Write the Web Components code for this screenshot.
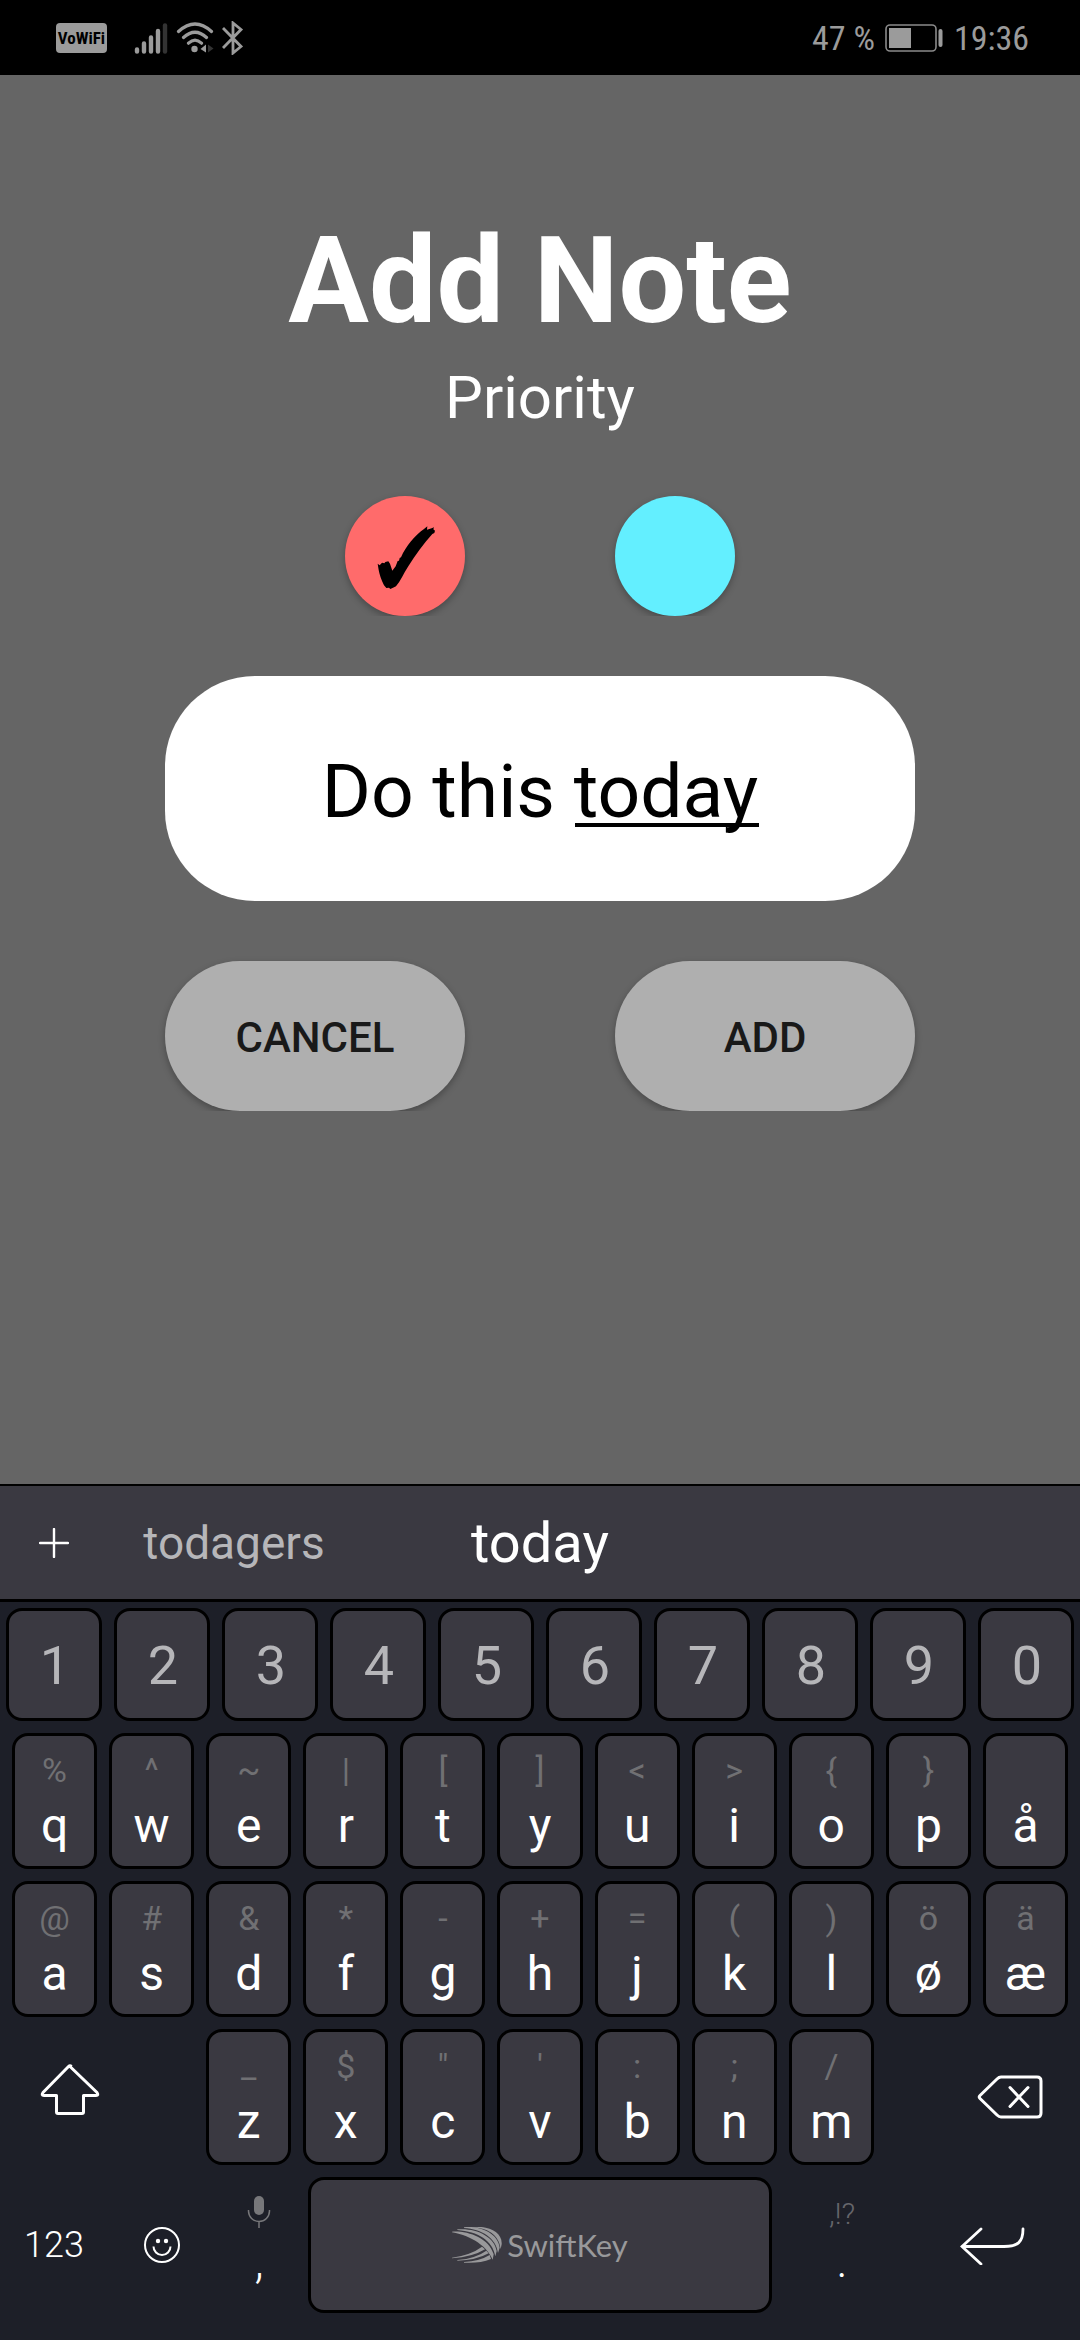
<!DOCTYPE html>
<html lang="en">
<head>
<meta charset="utf-8">
<meta name="viewport" content="width=device-width, initial-scale=1">
<title>Add Note</title>
<style>
  html, body { margin: 0; background: #656565; }
  body { font-family: Roboto, "Noto Sans", sans-serif; }
</style>
</head>
<body>
<note-screen></note-screen>

<script>
const define = (name, html, init) => {
  const template = document.createElement('template');
  template.innerHTML = html;
  customElements.define(name, class extends HTMLElement {
    constructor() {
      super();
      this.attachShadow({ mode: 'open' }).append(template.content.cloneNode(true));
    }
    connectedCallback() { if (init) init(this, this.shadowRoot); }
  });
};

/* ---------- status bar ---------- */
define('status-bar', `
<style>
  :host { display: flex; align-items: center; justify-content: space-between; height: 75px;
    padding: 0 51px 0 56px; background: #000; color: #9b9b9b; box-sizing: border-box; }
  .side { display: flex; align-items: center; }
  .badge { width: 51px; height: 30px; border-radius: 4px; background: #9b9b9b; color: #000;
    font: bold 17px/30px "Liberation Sans Narrow", "Roboto Condensed", Roboto, sans-serif; text-align: center; margin-right: 27px; }
  .text { font: 34px/40px "Roboto Condensed", "Liberation Sans Narrow", Roboto, sans-serif; }
  svg { display: block; }
  .signal { margin-right: 8px; } .wifi { margin-right: 8px; }
  .battery { margin: 0 11px 0 10px; }
</style>
<div class="side">
  <span class="badge">VoWiFi</span>
  <svg class="signal" width="34" height="32" viewBox="0 0 34 32" stroke="#9b9b9b" stroke-width="4.4" stroke-linecap="round"><path d="M3 27.5v2M10 21.5v8M17 15.500v14M24 9v20.500"/><path d="M31 3.500v26" stroke="#333"/></svg>
  <svg class="wifi" width="38" height="32" viewBox="0 0 38 32" fill="none" stroke="#9b9b9b" stroke-width="3.200" stroke-linecap="round"><path d="M2.500 9.500Q19-5.500 35.500 9.500M7.500 15.500Q19 5 30.500 15.500M12.500 21.200Q19 15 25.500 21.200"/><circle cx="18.500" cy="27" r="3.200" fill="#9b9b9b" stroke="none"/><path d="M30 22.500v8l-5.500-3.500z" fill="#9b9b9b" stroke="none"/><path d="M32 22.500v8l5.500-4z" fill="#333" stroke="none"/></svg>
  <svg width="22" height="34" viewBox="0 0 22 34" fill="none" stroke="#9b9b9b" stroke-width="2.800"><path d="M1 7L19 25.500 11 32V2l8 6.500L1 27"/></svg>
</div>
<div class="side">
  <span class="text">47 %</span>
  <svg class="battery" width="58" height="28" viewBox="0 0 58 28" fill="#9b9b9b"><rect x="1" y="1" width="50" height="26" rx="4" fill="none" stroke="#8a8a8a" stroke-width="1.600"/><rect x="4" y="4" width="22" height="20"/><rect x="53.500" y="5" width="4" height="18" rx="2"/></svg>
  <time class="text">19:36</time>
</div>
`);

/* ---------- priority swatch ---------- */
define('priority-option', `
<style>
  :host { display: block; width: 120px; height: 120px; clip-path: inset(-12px -12px 0); }
  label { display: grid; cursor: pointer; }
  label > * { grid-area: 1 / 1; }
  input { appearance: none; margin: 0; width: 120px; height: 120px; border-radius: 50%;
    background: var(--swatch); box-shadow: 0 3px 7px rgba(0,0,0,.28); }
  svg { display: none; pointer-events: none; z-index: 1; }
  input:checked + svg { display: block; }
</style>
<label><input type="radio" name="priority">
<svg width="120" height="120" viewBox="75 78 360 360"><path d="M173 281l6 5 7-8 7 2 3-4 9-2 5 7 7 21 10-13 6-16 4-1 2-8 4-2C258 228 285 196 312 177l10-8-1 10 14-4 7-3-2 6 5 4-2 7-6 3C312 220 287 254 264 290 250 312 242 332 228 349l-9 4-8 4-4-4-8 1-7-8C184 330 178 312 176 300Z"/></svg></label>
`, (host, root) => {
  const input = root.querySelector('input');
  input.checked = host.hasAttribute('checked');
  input.setAttribute('aria-label', host.getAttribute('label'));
});

/* ---------- pill button ---------- */
define('pill-button', `
<style>
  :host { display: block; flex: 1; clip-path: inset(-12px -12px 0); }
  button { display: block; box-sizing: border-box; width: 100%; height: 150px; border: 0; border-radius: 75px; padding: 3px 0 0;
    background: #afafaf; color: #191919; font: 500 42px/50px Roboto, sans-serif;
    text-transform: uppercase; box-shadow: 0 3px 7px rgba(0,0,0,.28); }
</style>
<button type="button"><slot></slot></button>
`);

/* ---------- note form ---------- */
define('note-form', `
<style>
  :host { display: flex; flex-direction: column; flex: 1; padding: 136px 165px 60px; color: #fff; background: #656565; }
  h1 { margin: 0; font-size: 120px; line-height: 141px; font-weight: 700; text-align: center; }
  h2 { margin: 11px 0 0; font-size: 60px; line-height: 70px; font-weight: 400; text-align: center; }
  .row { display: flex; justify-content: center; gap: 150px; }
  .swatches { margin-top: 63px; }
  input { display: block; box-sizing: border-box; width: 100%; height: 225px; margin: 60px 0; padding: 5px 40px 0;
    border: 0; border-radius: 90px; outline: 0; color: #000; font: 75px/88px Roboto, sans-serif; text-align: center;
    background: #fff linear-gradient(#000, #000) calc(50% + 127px) 147px / 184px 4px no-repeat; }
</style>
<h1>Add Note</h1>
<h2>Priority</h2>
<div class="row swatches">
  <priority-option label="High" checked style="--swatch:#ff6b6b"></priority-option>
  <priority-option label="Low" style="--swatch:#63efff"></priority-option>
</div>
<input type="text" value="Do this today" aria-label="Note" spellcheck="false">
<div class="row"><pill-button>Cancel</pill-button><pill-button>Add</pill-button></div>
`);

/* ---------- keyboard key ---------- */
define('soft-key', `
<style>
  :host { display: block; min-width: 0; }
  button { display: flex; flex-direction: column; align-items: center; box-sizing: border-box;
    width: 100%; height: 136px; margin: 0; padding: 14px 0 0; gap: 8px; border: 3px solid #000; border-radius: 16px;
    background: #3a3941; color: #fff; font: 48px/56px Roboto, sans-serif; }
  .hint { height: 40px; font-size: 34px; line-height: 40px; color: #707073; }
  :host([number]) button { height: 113px; justify-content: center; padding: 2px 0 0 2px; color: #b6b6b9; font-size: 54px; line-height: 64px; }
  :host([plain]) button { border-color: transparent; background: none; gap: 0; line-height: 54px; font-weight: 300; }
  :host([plain]) .hint { font-size: 30px; font-weight: 300; color: #66666b; }
  :host([center]) button { justify-content: center; padding: 0; }
  :host([center]) .hint, :host([number]) .hint { display: none; }
  :host([small]) button { font-size: 36px; }
</style>
<button type="button"><span class="hint"><slot name="hint"></slot></span><span class="main"><slot></slot></span></button>
`, (host, root) => {
  if (host.hasAttribute('hint')) root.querySelector('slot[name=hint]').textContent = host.getAttribute('hint');
  if (host.hasAttribute('label')) root.querySelector('button').setAttribute('aria-label', host.getAttribute('label'));
});

/* ---------- row of keys built from its attributes ---------- */
customElements.define('key-row', class extends HTMLElement {
  connectedCallback() {
    const root = this.attachShadow({ mode: 'open' });
    root.innerHTML = '<style>:host { display: flex; gap: 12px; } soft-key { flex: 1; }</style>';
    const hints = (this.getAttribute('hints') || '').split(' ');
    this.getAttribute('keys').split(' ').forEach((letter, i) => {
      const key = document.createElement('soft-key');
      key.textContent = letter;
      if (hints[i]) key.setAttribute('hint', hints[i]);
      if (this.hasAttribute('number')) key.setAttribute('number', '');
      root.append(key);
    });
  }
});

/* ---------- suggestion bar ---------- */
define('suggestion-bar', `
<style>
  :host { display: grid; grid-template-columns: 108fr 252fr 360fr 360fr; height: 113px; background: #3a3941;
    border-top: 2px solid #000; border-bottom: 3px solid #000; }
  button { display: flex; align-items: center; justify-content: center; padding: 0; border: 0; background: none;
    color: #b6b6b9; font: 46px/54px Roboto, sans-serif; }
  .best { color: #fff; font-size: 56px; line-height: 66px; }
</style>
<button type="button" aria-label="More"><svg width="30" height="30" viewBox="0 0 30 30" stroke="#fff" stroke-width="2.400" stroke-linecap="round"><path d="M15 1v28M1 15h28"/></svg></button>
<button type="button">todagers</button>
<button type="button" class="best">today</button>
`);

/* ---------- keyboard ---------- */
define('soft-keyboard', `
<style>
  :host { display: block; background: #1d1f28; }
  .keys { display: flex; flex-direction: column; gap: 12px; padding: 6px 0 27px; }
  .digits { padding: 0 6px; }
  .letters { padding: 0 12px; }
  .shifted { display: grid; grid-template-columns: 116fr 668fr 116fr; column-gap: 78px; padding: 0 12px; }
  .bottom { display: grid; grid-template-columns: 108fr 108fr 86fr 476fr 128fr 174fr; }
  .space { margin: 0 6px; }
  .brand { display: flex; align-items: center; gap: 5px; color: #99999b; font: 31px/40px Lato, sans-serif; }
  svg { display: block; }
</style>
<suggestion-bar></suggestion-bar>
<div class="keys">
  <key-row class="digits" number keys="1 2 3 4 5 6 7 8 9 0"></key-row>
  <key-row class="letters" keys="q w e r t y u i o p å" hints="% ^ ~ | [ ] &lt; &gt; { }"></key-row>
  <key-row class="letters" keys="a s d f g h j k l ø æ" hints="@ # &amp; * - + = ( ) ö ä"></key-row>
  <div class="shifted">
    <soft-key plain center label="Shift"><svg width="60" height="68" viewBox="0 0 60 68" fill="none" stroke="#fff" stroke-width="3" stroke-linejoin="round"><path d="M30 3.500L57 29.500Q59 32.500 56 32.500H43.500V49q0 1.500-1.500 1.500H18q-1.500 0-1.500-1.500V32.500H4Q1 32.500 3 29.500L28.500 3.500Q30 2 31.500 3.500"/></svg></soft-key>
    <key-row keys="z x c v b n m" hints="_ $ &quot; ' : ; /"></key-row>
    <soft-key plain center label="Backspace"><svg width="66" height="44" viewBox="0 0 66 44" fill="none" stroke="#fff" stroke-width="3" stroke-linejoin="round" stroke-linecap="round"><path d="M24 2H60q4 0 4 4V38q0 4-4 4H24q-2 0-4-2L3 23.500q-1.500-1.500 0-3L20 4q2-2 4-2ZM33 12.500L51 31.500M51 12.500L33 31.500"/></svg></soft-key>
  </div>
  <div class="bottom">
    <soft-key plain center small>123</soft-key>
    <soft-key plain center label="Emoji"><svg width="38" height="38" viewBox="0 0 38 38" fill="none" stroke="#fff" stroke-width="2"><circle cx="19" cy="19" r="17"/><path d="M10.500 20.500a8.500 8.500 0 0 0 17 0"/><g fill="#fff" stroke="none"><circle cx="15" cy="15" r="2.200"/><circle cx="23" cy="15" r="2.200"/></g></svg></soft-key>
    <soft-key plain label="Comma, voice input"><svg slot="hint" width="24" height="36" viewBox="0 0 24 36" fill="none" stroke="#77777a" stroke-width="1.500"><rect x="7" y="2" width="10" height="19" rx="5" fill="#77777a" stroke="none"/><path d="M1.500 16v1a10.500 10.500 0 0 0 21 0v-1M12 27.500V34"/></svg>,</soft-key>
    <soft-key class="space" center label="Space"><span class="brand"><svg width="50" height="36" viewBox="68 80 150 108" fill="#99999b"><path d="M68 94C115 91 178 112 193 162L190 178C174 140 130 107 68 96Z"/><path d="M84 87C140 82 195 108 202 152L198 168C190 120 146 94 84 89Z"/><path d="M104 81C155 76 206 100 211 142L206 158C200 112 158 87 104 83Z"/><path d="M128 80C175 75 220 94 217 132L214 146C208 100 172 83 128 81Z"/><path d="M68 172Q125 164 158 139L167 147Q130 170 68 174Z"/><path d="M84 179Q140 174 171 151L178 159Q140 180 84 181Z"/><path d="M104 185Q150 183 181 164L185 176Q150 190 104 187Z"/></svg>SwiftKey</span></soft-key>
    <soft-key plain hint=",!?">.</soft-key>
    <soft-key plain center label="Enter"><svg width="66" height="40" viewBox="0 0 66 40" fill="none" stroke="#fff" stroke-width="2.800" stroke-linecap="round"><path d="M21 4L2 21.500 21 39M2 21.500H44C58 21.500 63 17 63 4"/></svg></soft-key>
  </div>
</div>
`);

/* ---------- whole screen ---------- */
define('note-screen', `
<style>
  :host { display: flex; flex-direction: column; min-height: 100vh; }
</style>
<status-bar></status-bar>
<note-form></note-form>
<soft-keyboard></soft-keyboard>
`);
</script>
</body>
</html>
